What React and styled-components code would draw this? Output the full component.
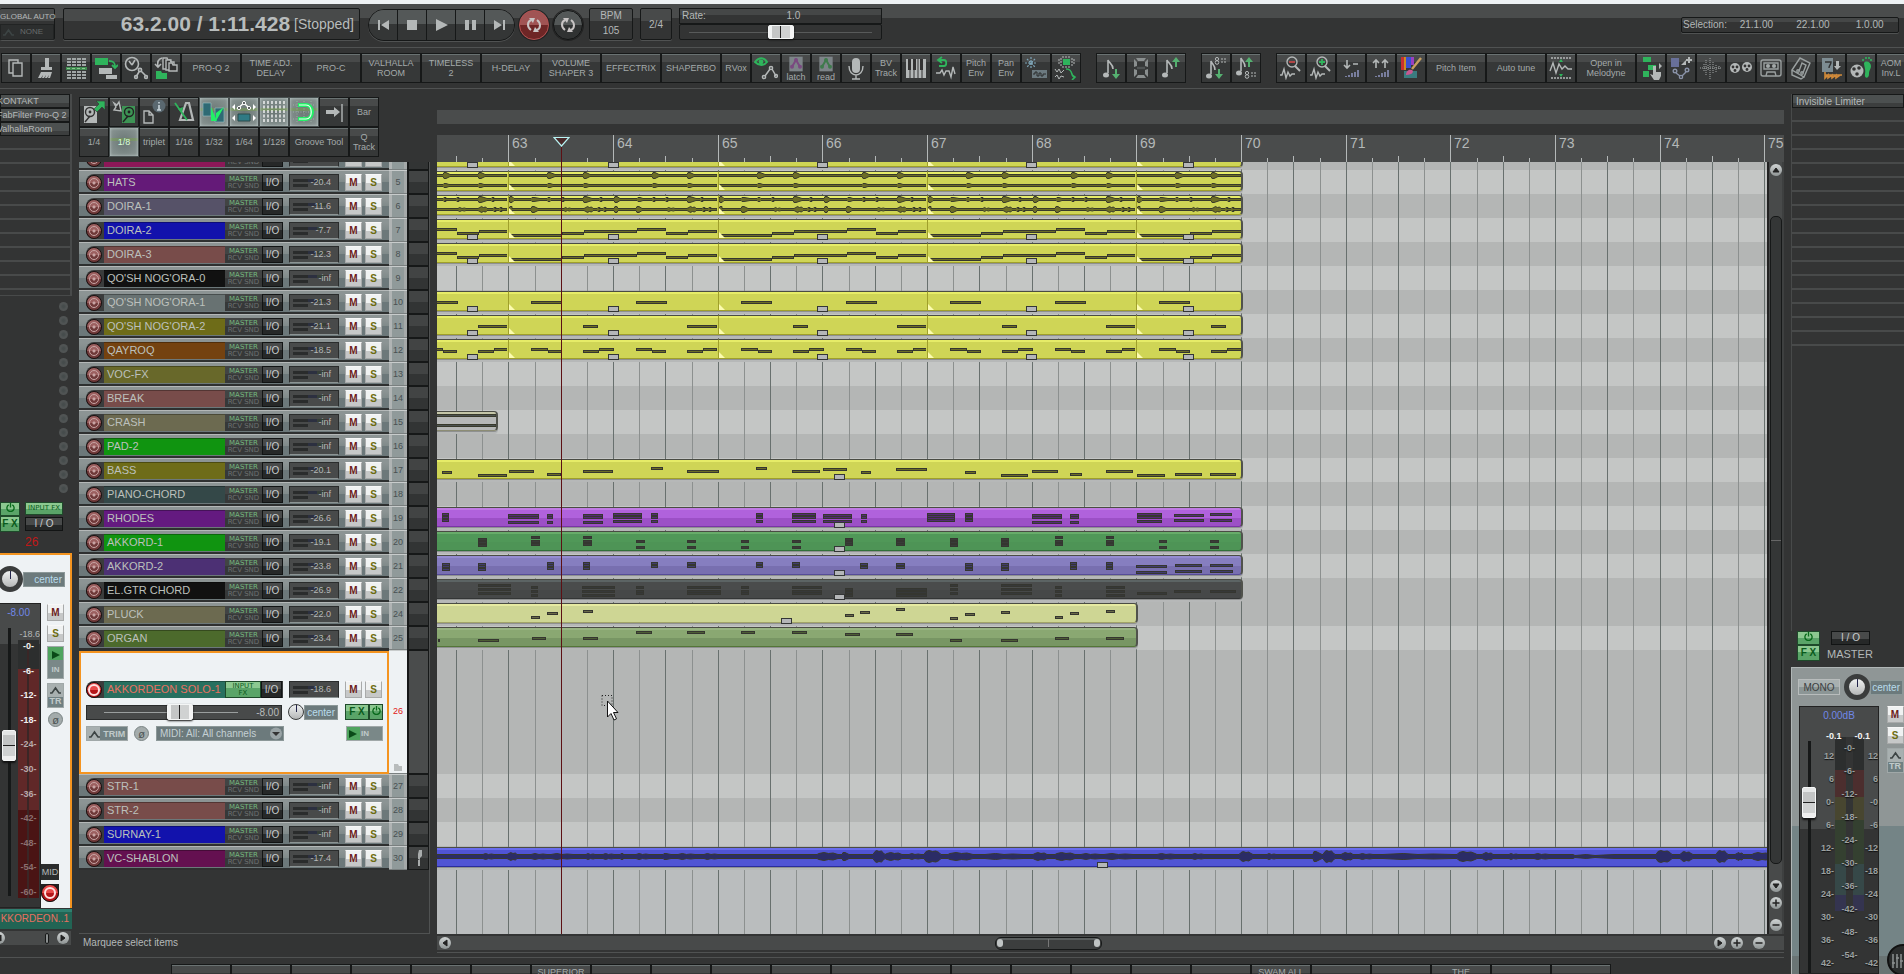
import React, { useState } from "react";
import styled, { createGlobalStyle, css } from "styled-components";

const GREEN = "#2fb45c";
const GREY = "#b4b8b8";

/* ---------- timeline maths ---------- */

const FIRST_BAR = 63;
const BAR_WIDTH = 104.66;
const barX = (bar) => Math.round(71.4 + (bar - FIRST_BAR) * BAR_WIDTH);

const quarters = [];
for (let i = 0; i < 80; i++) {
  quarters.push({ x: barX(62.5 + i / 4), kind: i % 4 === 2 ? "bar" : i % 2 === 0 ? "half" : "quarter" });
}
const bars = Array.from({ length: 18 }, (_, i) => FIRST_BAR + i);

/* ---------- data ---------- */

// notes are [x, width, y, y, ...], one y for each voice of the chord
const stepPattern = [[0, 53, 14], [53, 22, 12], [75, 53, 10], [128, 29, 8], [157, 22, 12], [179, 29, 10]];
const loops = {
  doira: stepPattern,
  nog1: [[22, 31, 9], [127, 31, 9]],
  nog2: [[74, 15, 9], [178, 30, 9]],
  qayroq: [[22, 17, 8], [39, 14, 10], [74, 16, 10], [90, 15, 8], [127, 16, 8], [143, 14, 10], [178, 16, 10], [194, 14, 8]],
};

const hits = {
  hats: [
    { mid: 4, bumps: [[38, 46, 3], [74, 81, 3], [143, 150, 3], [178, 185, 3]] },
    { mid: 14, bumps: [[38, 44, 2], [74, 80, 2], [143, 149, 2], [178, 184, 2]] },
  ],
  doira: [
    { mid: 4, bumps: [[0, 5, 3], [22, 31, 2], [38, 42, 2], [52, 54, 2], [74, 83, 3], [90, 92, 2], [105, 111, 3], [128, 134, 2], [143, 145, 2], [156, 158, 2], [178, 187, 3], [191, 193, 2]] },
    { mid: 14, bumps: [[0, 3, 3], [22, 29, 3], [53, 64, 2], [75, 86, 3], [88, 90, 2], [94, 96, 2], [105, 109, 3], [127, 133, 3], [156, 168, 2], [178, 189, 3], [193, 195, 2], [199, 201, 2]] },
  ],
};

const bass = [
  [5, 10, 11], [41, 29, 14], [72, 25, 10], [110, 14, 13], [146, 30, 10], [214, 12, 7], [250, 32, 10], [319, 11, 7],
  [355, 28, 10], [386, 24, 8], [424, 10, 11], [459, 31, 8], [528, 11, 11], [564, 27, 14], [595, 26, 10],
  [633, 12, 13], [669, 27, 10], [700, 28, 14], [738, 27, 13], [773, 26, 13],
];
const rhodes = [
  [5, 7, 5, 8, 11], [71, 31, 6, 8, 13], [110, 6, 6, 8, 13], [146, 20, 6, 8, 13], [176, 29, 5, 8, 12], [214, 7, 5, 8, 12],
  [319, 7, 5, 8, 12], [355, 24, 5, 8, 12], [386, 29, 6, 8, 12], [424, 6, 6, 8, 12], [490, 28, 5, 7, 9, 11],
  [528, 8, 5, 8, 11], [595, 30, 6, 8, 13], [633, 9, 6, 8, 13], [700, 25, 5, 8, 12], [737, 30, 6, 11], [773, 22, 5, 11],
];
const akkord1 = [
  [41, 9, 6, 9, 12], [94, 9, 4, 8, 11], [146, 9, 4, 8, 11], [199, 9, 8, 14], [250, 9, 8, 14], [304, 8, 8, 14],
  [355, 9, 8, 14], [408, 8, 6, 9, 11], [459, 9, 6, 9, 11], [513, 8, 6, 9, 12], [564, 8, 6, 9, 12], [618, 8, 4, 8, 11],
  [669, 8, 4, 8, 11], [722, 8, 8, 14], [773, 9, 8, 14],
];
const akkord2 = [
  [5, 8, 7, 9, 12], [41, 8, 7, 9, 12], [110, 7, 6, 8, 11], [146, 7, 6, 8, 11], [214, 7, 6, 9], [250, 9, 6, 9],
  [319, 7, 6, 9], [355, 8, 6, 9], [423, 8, 7, 10], [459, 9, 7, 10], [528, 8, 7, 9, 12], [564, 8, 7, 9, 12],
  [633, 7, 6, 8, 11], [669, 7, 6, 8, 11], [699, 31, 9, 15], [738, 27, 8, 14], [773, 23, 8, 14],
];
const guitar = [
  [41, 33, 4, 8, 12], [94, 7, 6, 10, 14], [145, 33, 6, 10, 14], [199, 8, 6, 10, 12], [250, 34, 6, 10, 12],
  [304, 8, 6, 10, 12], [355, 30, 6, 10, 12], [408, 8, 8, 11, 14], [459, 31, 8, 11, 14], [513, 8, 4, 8, 12],
  [564, 31, 4, 8, 12], [618, 7, 6, 10, 14], [669, 19, 6, 10, 14], [700, 30, 12], [737, 27, 10], [773, 26, 10],
];
const pluck = [
  [94, 9, 12], [110, 11, 8], [146, 10, 6], [408, 9, 10], [423, 10, 7], [459, 9, 4], [513, 8, 13],
  [528, 10, 9], [564, 9, 7], [618, 8, 12], [633, 9, 8], [669, 9, 6],
];
const organ = [
  [1, 2, 11], [41, 21, 11], [95, 14, 9], [146, 15, 9], [199, 16, 3], [250, 18, 3], [304, 14, 3], [355, 15, 3],
  [408, 15, 5], [459, 17, 5], [513, 12, 11], [564, 17, 11], [618, 14, 9], [669, 18, 9],
];
const vocal = [{
  mid: 9,
  base: 2,
  bumps: [
    [44, 59, 3], [70, 82, 4], [92, 112, 3], [112, 138, 3], [147, 160, 3], [164, 179, 3], [183, 186, 3], [197, 214, 3],
    [226, 234, 3], [239, 260, 3], [265, 283, 3], [380, 403, 4], [405, 412, 4], [436, 448, 6], [448, 467, 4],
    [470, 486, 3], [487, 504, 6], [511, 538, 4], [546, 588, 3], [596, 612, 4], [618, 640, 4], [642, 665, 3], [665, 698, 3],
    [718, 740, 3], [753, 769, 3], [802, 816, 5], [828, 841, 3], [876, 885, 5], [886, 898, 6], [904, 918, 4],
    [920, 938, 3], [944, 1018, 3], [1020, 1040, 5], [1045, 1058, 4], [1070, 1083, 3], [1095, 1114, 3],
    [1136, 1180, 2], [1219, 1235, 6], [1243, 1256, 5], [1279, 1291, 6], [1298, 1308, 4], [1315, 1335, 4],
  ],
}];

const palettes = {
  yellow: { hi: "#e6ec68", body: "#cfd556", low: "#cfd556", edge: "#a0a02a", note: "#6c6c26" },
  gray: { hi: "#c4c6a8", body: "#b6b8b8", low: "#b6b8b8", edge: "#8c8c74", note: "#4c5250" },
  purple: { hi: "#c07ae4", body: "#b062dc", low: "#9c50c6", edge: "#7a34a6", note: "#542a74" },
  green: { hi: "#68ac6a", body: "#509858", low: "#4e9456", edge: "#307038", note: "#383c38" },
  violet: { hi: "#948cd0", body: "#867ec0", low: "#786fb0", edge: "#564c98", note: "#403c6c" },
  dark: { hi: "#5c6464", body: "#4a4c4c", low: "#464848", edge: "#343636", note: "#363838" },
  cream: { hi: "#e6eaa2", body: "#ced694", low: "#ced694", edge: "#a2a468", note: "#6a6a48" },
  olive: { hi: "#98b482", body: "#8aa872", low: "#789664", edge: "#547638", note: "#4c5c34" },
  blue: { hi: "#686cec", body: "#5054d4", low: "#5054d4", edge: "#2a2c9c", note: "#2b2c66" },
};

const loopHandles = [30, 171, 380, 589, 746];
const looped = (pattern, wave) =>
  [[61, 63], [63, 65], [65, 67], [67, 69], [69, 70]].map(([from, to]) => ({
    x: barX(from), w: barX(to) - barX(from) + (to === 70 ? 2 : 0), palette: "yellow", notes: pattern, wave,
    fade: from > 61, last: to === 70,
  }));
const single = (palette, w, notes, wave) => [{ x: -10, w: w + 10, shift: 9, palette, notes, wave, last: true }];

const tracks = [
  { n: 4, name: "SD", color: "#8c1858", vol: "-inf", clips: looped([]), handles: loopHandles },
  { n: 5, name: "HATS", color: "#641a78", vol: "-20.4", clips: looped(null, hits.hats) },
  { n: 6, name: "DOIRA-1", color: "#565268", vol: "-11.6", clips: looped(null, hits.doira) },
  { n: 7, name: "DOIRA-2", color: "#1212ac", vol: "-7.7", clips: looped(loops.doira), handles: loopHandles },
  { n: 8, name: "DOIRA-3", color: "#784c4a", vol: "-12.3", clips: looped(loops.doira), handles: loopHandles },
  { n: 9, name: "QO'SH NOG'ORA-0", color: "#111111", vol: "-inf" },
  { n: 10, name: "QO'SH NOG'ORA-1", color: "#687272", vol: "-21.3", clips: looped(loops.nog1), handles: loopHandles },
  { n: 11, name: "QO'SH NOG'ORA-2", color: "#6e6c18", vol: "-21.1", clips: looped(loops.nog2), handles: loopHandles },
  { n: 12, name: "QAYROQ", color: "#744210", vol: "-18.5", clips: looped(loops.qayroq), handles: loopHandles },
  { n: 13, name: "VOC-FX", color: "#68682a", vol: "-inf" },
  { n: 14, name: "BREAK", color: "#784c4a", vol: "-inf" },
  { n: 15, name: "CRASH", color: "#6c6a50", vol: "-inf", clips: single("gray", 61, null, [{ mid: 4, bumps: [] }, { mid: 14, bumps: [] }]) },
  { n: 16, name: "PAD-2", color: "#109410", vol: "-inf" },
  { n: 17, name: "BASS", color: "#6e6c18", vol: "-20.1", clips: single("yellow", 806, bass), handles: [397] },
  { n: 18, name: "PIANO-CHORD", color: "#344848", vol: "-inf" },
  { n: 19, name: "RHODES", color: "#641a80", vol: "-26.6", clips: single("purple", 806, rhodes), handles: [397] },
  { n: 20, name: "AKKORD-1", color: "#109410", vol: "-19.1", clips: single("green", 806, akkord1), handles: [397] },
  { n: 21, name: "AKKORD-2", color: "#4c3074", vol: "-23.8", clips: single("violet", 806, akkord2), handles: [397] },
  { n: 22, name: "EL.GTR CHORD", color: "#111111", vol: "-26.9", clips: single("dark", 806, guitar), handles: [397] },
  { n: 24, name: "PLUCK", color: "#6c6a50", vol: "-22.0", clips: single("cream", 701, pluck), handles: [344] },
  { n: 25, name: "ORGAN", color: "#4c6a2c", vol: "-23.4", clips: single("olive", 701, organ) },
  { n: 26, name: "AKKORDEON SOLO-1", color: "#287060", vol: "-18.6", selected: true },
  { n: 27, name: "STR-1", color: "#784c4a", vol: "-inf" },
  { n: 28, name: "STR-2", color: "#784c4a", vol: "-inf" },
  { n: 29, name: "SURNAY-1", color: "#1212ac", vol: "-inf" },
  { n: 30, name: "VC-SHABLON", color: "#641050", vol: "-17.4", clips: single("blue", 2600, null, vocal), handles: [660], mic: true },
];

/* ---------- icons ---------- */

const note = "M9 17V4c1 3 5 4 5 9";
const icons = {
  copy: <g fill="none" stroke={GREY} strokeWidth="1.4"><path d="M14 7V4H5v13h4" /><path d="M9 7h9v13H9z" /></g>,
  brush: <g fill={GREY}><path d="M11 2h4v9h3v3H7v-3h4z" /><path d="M7 16h11l-2 6h-2l1-3-2 3h-2l1-3-2 3H8l1-3-2 3H4z" /></g>,
  rows: (
    <g fill="#a0a6a6">
      {[2, 5, 8, 15, 18, 21].map((y) => [3, 8, 13, 18].map((x) => <rect key={x + "-" + y} x={x} y={y} width="4" height="2" />))}
      <path fill="#3f8c50" d="M2 11h21v3H2z" />
      <path fill="#8cc890" d="M3 12h3v1H3zM8 12h3v1H8zM13 12h3v1h-3zM18 12h3v1h-3z" />
    </g>
  ),
  reorder: <g><path fill={GREEN} d="M1 2h13v7H1z" /><path fill="none" stroke={GREEN} strokeWidth="1.8" d="M15 5c5 0 6 2 6 6m-3-2 3 3 3-3" /><path fill={GREY} d="M5 12h13v6H5zM12 19h11v4H12z" /></g>,
  clock: <g fill="none" stroke={GREY} strokeWidth="1.6"><circle cx="8" cy="8" r="6.5" /><path d="M8 9 5 5m3 4 3-5M12 21l4-7 6 6" /><circle cx="16" cy="14" r="1.6" fill="#333" /><circle cx="12" cy="21" r="1.4" fill="#333" /><circle cx="22" cy="21" r="1.4" fill="#333" /></g>,
  folders: <g><g fill="#333" stroke={GREY} strokeWidth="1.4"><path d="M9 2h4l1 2h3v9H9z" /><path d="M12 4h4l1 2h3v8h-8z" /><path d="M15 7h3l1 2h4v6h-8z" /></g><path fill={GREEN} d="M2 15h5l1 2h5v6H2z" /><path fill="none" stroke={GREY} strokeWidth="1.6" d="M8 2C4 3 3 6 4 11m-3-3 3 3 3-3" /></g>,
  eye: <g fill="none"><path stroke={GREEN} strokeWidth="2" d="M1 6c4-5 9-5 12 0-3 4-8 4-12 0z" /><circle cx="7" cy="6" r="2.4" fill={GREEN} /><g stroke={GREY} strokeWidth="1.5"><circle cx="17" cy="12" r="1.6" /><path d="m16 13-5 7m7-7 4 7m-9 1" /><circle cx="10" cy="21" r="1.6" /><circle cx="22" cy="20" r="1.4" /></g></g>,
  env: (c) => <g><path fill="#7d8488" d="M2 1h20v22H2z" /><path fill="none" stroke={c} strokeWidth="3" d="m6 16 6-10 6 10" /><g fill={c}><circle cx="6" cy="16" r="3" /><circle cx="12" cy="6" r="3" /><circle cx="18" cy="16" r="3" /></g></g>,
  mic: <g fill={GREY}><rect x="8" y="2" width="8" height="15" rx="4" /><path fill="none" stroke={GREY} strokeWidth="1.4" d="M5 10c0 12 14 12 14 0M12 19v4m-4 0h8" /></g>,
  piano: <g><path fill={GREY} d="M2 3h20v19H2z" /><path stroke="#333" strokeWidth="1" d="M6 3v19M10 3v19M14 3v19M18 3v19" /><path fill="#333" d="M4 3h3v11H4zM9 3h3v11H9zM16 3h3v11h-3z" /></g>,
  undo: <g fill="none" strokeWidth="1.8"><path stroke={GREEN} d="M8 1 4 4l4 3M4 4h6c3 0 3 6 0 6H5" /><path stroke={GREY} strokeWidth="1.4" d="M2 17h4l2-3 2 5 2-4h3l2 6 2-10 2 7" /></g>,
  spark: <g><path stroke="#7fa6b8" strokeWidth="1.2" strokeDasharray="2 1" d="M7 1v12M1 7h12M3 3l8 8M11 3l-8 8" /><path fill="#6c7a80" d="M8 14h15v8H8z" /><path stroke="#2a2c2c" fill="none" d="M9 18h2v-2h2v4h2v-3h2v3h2v-2h3" /></g>,
  glue: <g><path fill={GREEN} d="M9 3h7v6H9z" /><path stroke={GREY} fill="none" strokeDasharray="2 1" d="M5 3v6M7 2v8M18 2v8M20 3v6M8 1h9M8 11h9" /><path stroke={GREY} fill="none" d="M1 13l2 3 2-3 2 4 3-3m-9 7 2-2 2 4 2-3 3 1" /><path stroke={GREEN} strokeWidth="1.6" fill="none" d="M12 13c8 0 4 8 9 8m-3-2 3 2-3 3" /></g>,
  noteDown: <g><path fill="none" stroke={GREY} strokeWidth="1.6" d={note} /><ellipse cx="7" cy="19" rx="3" ry="2.5" fill={GREY} /><path fill="#55b070" d="M16 13h2v5h3l-4 5-4-5h3z" /></g>,
  noteUp: <g><path fill="none" stroke={GREY} strokeWidth="1.6" d="M8 17V4c1 3 5 4 5 9" /><ellipse cx="6" cy="19" rx="3" ry="2.5" fill={GREY} /><path fill="#55b070" d="M16 11h2V6h3l-4-5-4 5h3z" /></g>,
  digit: <g><path fill="#8a8f8f" d="M7 2h10l-2 3H9zM7 22h10l-2-3H9zM5 3l3 3v4l-3 1zM19 3l-3 3v4l3 1zM5 21l3-3v-4l-3-1zM19 21l-3-3v-4l3-1z" /><path stroke="#505454" strokeWidth="2.4" d="M8 12h8" /></g>,
  octDown: <g><path fill="none" stroke={GREY} strokeWidth="1.6" d="M7 18V5c1 3 4 4 4 9" /><ellipse cx="5" cy="20" rx="3" ry="2.5" fill={GREY} /><path fill="#55b070" d="M14 13h2v5h3l-4 5-4-5h3z" /><g fill="none" stroke={GREY}><circle cx="13" cy="3" r="1.6" /><circle cx="13" cy="6.5" r="1.8" /><path d="M17 3h6M17 6h6" strokeDasharray="2 1" /></g></g>,
  octUp: <g><path fill="none" stroke={GREY} strokeWidth="1.6" d="M7 15V2c1 3 4 4 4 9" /><ellipse cx="5" cy="17" rx="3" ry="2.5" fill={GREY} /><path fill="#55b070" d="M14 11h2V6h3l-4-5-4 5h3z" /><g fill="none" stroke={GREY}><circle cx="13" cy="17" r="1.6" /><circle cx="13" cy="20.5" r="1.8" /><path d="M17 17h6M17 20h6" strokeDasharray="2 1" /></g></g>,
  zoomOut: <g fill="none" stroke={GREY} strokeWidth="1.4"><circle cx="13" cy="6" r="5" /><path stroke="#c04848" strokeWidth="1.8" d="M10 6h6" /><path d="m16 10 5 5" strokeWidth="2" /><path d="M1 19h2l2-6 2 9 2-6 2 4 2-2h3" /></g>,
  zoomIn: <g fill="none" stroke={GREY} strokeWidth="1.4"><circle cx="13" cy="6" r="5" /><path stroke={GREEN} strokeWidth="1.8" d="M10 6h6M13 3v6" /><path d="m16 10 5 5" strokeWidth="2" /><path d="M1 19h2l2-6 2 9 2-6 2 4 2-2h3" /></g>,
  volDown: <g><path fill="none" stroke={GREY} strokeWidth="1.6" d="M8 4v8m-3-3 3 3 3-3M14 8h5" /><path stroke="#8a90b8" strokeWidth="1.6" d="M7 21v-1M10 21v-2M13 21v-4M16 21v-5M19 21v-7" /></g>,
  volUp: <g><path fill="none" stroke={GREY} strokeWidth="1.6" d="M7 12V4M4 7l3-3 3 3M16 12V4m-3 3 3-3 3 3" /><path stroke="#8a90b8" strokeWidth="1.6" d="M7 21v-1M10 21v-2M13 21v-4M16 21v-5M19 21v-7" /></g>,
  paint: <g><path fill="#c83030" d="M2 1h3v13H2z" /><path fill="#d08a20" d="M5 1h2v13H5z" /><path fill="#3a50d0" d="M7 1h5v11H7z" /><path fill="#9a40c0" d="M12 1h3v8h-3z" /><path fill="#3a7c80" d="M5 15h13v7H5z" /><path fill="#c85890" d="M7 19c0-5 4-6 6-5s1 5-6 5z" /><path stroke="#c8a060" strokeWidth="2.4" d="m13 13 9-11" /></g>,
  fit: <g fill="none" stroke={GREY}><path strokeDasharray="2 1" d="M2 2h20M2 22h20" strokeWidth="1.6" /><path d="M1 15l3-8 3 10 3-9 3 5 3-3 3 3h4" strokeWidth="1.4" /><path fill={GREEN} stroke="none" d="m12 3 2 3h-4zM12 21l2-3h-4z" /></g>,
  touch: <g><path fill={GREEN} d="M4 1h8v5H4zM9 9h8v5H9zM4 15h6v6H4z" /><path fill={GREY} d="M14 10h3v6h5v4l-2 4h-5l-4-6 3 1zM20 7l3 3-3 3z" /></g>,
  nodes: <g><path fill="#68709a" d="M2 2h8v9H2z" /><path fill={GREY} d="m12 9 5-5v5zM19 1h2v6h-2zM17 3h6v2h-6z" /><g fill="none" stroke="#8a93a8" strokeWidth="1.4"><circle cx="6" cy="15" r="1.8" /><circle cx="12" cy="21" r="1.6" /><circle cx="18" cy="14" r="1.8" /><path d="m7 17 4 3m2 0 4-4" /></g></g>,
  dots: <g stroke="#a0a4a4" strokeDasharray="1 1"><path d="M1 12h22" /><path d="M5 8v8M7 4v16M9 9v6M11 2v21M14 6v12M17 9v7M20 10v4" /></g>,
  reels: <g><g fill={GREY}><circle cx="6" cy="12" r="5" /><circle cx="18" cy="11" r="5" /></g><g fill="#333"><circle cx="4" cy="11" r="1.4" /><circle cx="8" cy="11" r="1.4" /><circle cx="6" cy="14.5" r="1.4" /><circle cx="16" cy="10" r="1.4" /><circle cx="20" cy="10" r="1.4" /><circle cx="18" cy="13.5" r="1.4" /></g></g>,
  tape: <g fill="none" stroke="#9aa0a0" strokeWidth="1.4"><rect x="2" y="4" width="20" height="16" rx="2" /><path d="M5 7h14v6H5zM7 20l1-4h8l1 4" /><circle cx="9" cy="10" r="1.4" fill={GREY} /><circle cx="15" cy="10" r="1.4" fill={GREY} /></g>,
  book: <g fill="none" stroke="#9aa0a0" strokeWidth="1.4"><path d="M3 14 11 2l10 5-6 14zM3 14v5l9 4 3-2" /><path d="m10 15 3-8 4 2-3 8" /><circle cx="9" cy="15" r="1.2" /><circle cx="13" cy="17" r="1.2" /></g>,
  crossfade: <g><path fill="#7d8c92" d="M3 2h11v14H3z" /><path fill="none" stroke="#333" strokeWidth="1.4" d="M6 6h6c0 3-2 3-2 6" /><path fill={GREY} d="M17 5h3v5h2l-4 4-3-4h2z" /><path fill="none" stroke="#d08a3a" strokeWidth="1.6" d="M6 16v6l3-3 0 3 4-3v3l4-3v3l4-3M6 19h17" /></g>,
  foot: <g><circle cx="8" cy="15" r="6.5" fill={GREY} /><g fill="#333"><circle cx="5" cy="13" r="1.8" /><circle cx="10" cy="12" r="1.8" /><circle cx="8" cy="18" r="1.8" /></g><path fill={GREEN} d="M15 7c2-3 7-1 7 3 0 3-2 4-2 8 0 5-5 5-4 0 1-4-1-8-1-11z" /><path stroke={GREEN} strokeWidth="1.6" d="M14 5V3M17 3V1M20 3V1M22 5V3" /></g>,
  diskOut: <g><rect x="2" y="6" width="13" height="17" fill={GREY} /><circle cx="8" cy="12" r="4.5" fill="none" stroke="#333" strokeWidth="1.4" /><circle cx="8" cy="12" r="1.4" fill="#333" /><path d="m3 22 5-6" stroke="#333" strokeWidth="1.4" /><path fill={GREEN} stroke="#333" strokeWidth=".6" d="M14 1h9v9l-3-3-5 5-3-3 5-5z" /></g>,
  diskIn: <g><rect x="10" y="6" width="13" height="17" fill="#3d9455" /><circle cx="17" cy="12" r="4.5" fill="none" stroke="#222" strokeWidth="1.4" /><circle cx="17" cy="12" r="1.4" fill="#222" /><path d="m11 22 5-6" stroke="#222" strokeWidth="1.4" /><path fill="#333" stroke={GREY} strokeWidth="1.4" d="M2 3l3 2 2-3 2 9-7-1 2-3z" /></g>,
  info: <g><path fill="none" stroke={GREY} strokeWidth="1.4" d="M2 11h5l4 4v8H2zM7 11v4h4" /><circle cx="17" cy="6" r="6.5" fill="#5a6870" /><path stroke="#c8d4da" strokeWidth="1.6" d="M17 5v5M17 2v1.6M15 10h4" /></g>,
  metro: <g fill="none"><path stroke={GREY} strokeWidth="2.2" d="M14 3 8 20h13L17 3z" /><path stroke={GREEN} strokeWidth="1.8" d="m3 3 12 17" /><path fill={GREEN} d="m6 9 5-2-1 6z" /></g>,
  crossOn: <g><path fill="#2f6a74" stroke="#9cc4c8" strokeWidth=".6" d="M1 3h8v13H1zM13 8h9v14h-9z" /><path fill="#22f066" d="M9 7v14h6zM22 7l-8 6 0 8z" /></g>,
  envOn: <g><path fill="none" stroke="#fff" strokeWidth="1.4" d="M5 9l7-6 5 5" /><g fill="#4a5050" stroke="#fff"><circle cx="7" cy="8" r="1.6" /><circle cx="12" cy="3" r="1.6" /><circle cx="17" cy="8" r="1.6" /></g><path fill="#fff" d="m0 7 3-3v6zM24 7l-3-3v6zM0 18l3-3v6zM24 18l-3-3v6z" /><path fill="#2f7a84" stroke="#2a4a4a" d="M6 14h12v7H6z" /></g>,
  gridOn: <g stroke="#fff" strokeDasharray="3 1.5" strokeWidth="1.3"><path d="M2 1v22M6 1v22M10 1v22M14 1v22M18 1v22M22 1v22" /></g>,
  magnetOn: <g fill="none"><path stroke="#9ab0a4" strokeDasharray="1 1.5" d="M1 5h22M1 12h22M1 19h22M5 1v22M12 1v22M19 1v22" /><path stroke="#22f066" strokeWidth="4" d="M6 5h8c8 0 8 14 0 14H6" /><path stroke="#f0fff4" strokeWidth="1.2" d="M7 5h7c7 0 7 14 0 14H7" /></g>,
  arrow: <g><path fill={GREY} d="M4 10h8V7l6 5-6 5v-3H4z" /><path stroke={GREY} strokeWidth="1.4" d="M20 4v18" /></g>,
};

function Icon({ name, arg, size = 24 }) {
  const art = typeof icons[name] === "function" ? icons[name](arg) : icons[name];
  return <svg width={size} height={size} viewBox="0 0 24 24" aria-hidden="true">{art}</svg>;
}

/* ---------- page ---------- */

const GlobalStyle = createGlobalStyle`
  * { box-sizing: border-box; }
  body {
    margin: 0;
    background: #333434;
    font-family: "Liberation Sans", Arial, sans-serif;
    font-size: 10px;
    color: #b4b8b8;
    overflow: hidden;
  }
  button, select, input { font-family: inherit; margin: 0; padding: 0; border: 0; }
`;

const Page = styled.div`
  display: flex;
  flex-direction: column;
  height: 100vh;
  border-top: 4px solid #eef2f4;
  overflow: hidden;
`;

const Transport = styled.header`
  display: flex;
  align-items: flex-start;
  flex: none;
  height: 44px;
  padding: 4px 5px 0 0;
  background: linear-gradient(#4a4c4c 14px, #333434 14px);
  border-bottom: 1px solid #505252;
`;

const Inset = styled.div`
  height: 32px;
  border: 1px solid #161818;
  border-radius: 2px;
  box-shadow: 0 1px 0 #505252;
  background: linear-gradient(#484a4a 12px, #333434 12px);
`;

const GlobalAuto = styled(Inset)`
  width: 55px;
  font-size: 8px;
  line-height: 15px;
  text-align: center;
  border-left: 0;
  white-space: nowrap;
  small {
    display: flex;
    align-items: center;
    justify-content: space-between;
    font-size: 8px;
    line-height: 14px;
    color: #686c6c;
    padding: 0 10px 0 2px;
    border: 1px solid #222424;
    background: #2c2e2e;
  }
`;

const TimeBox = styled(Inset)`
  display: flex;
  align-items: center;
  justify-content: flex-end;
  width: 297px;
  margin-left: 8px;
  padding-right: 5px;
  gap: 4px;
  font-size: 14px;
  color: #b8bcbc;
  strong { font-size: 21px; }
`;

const Pill = styled.div`
  display: flex;
  height: 32px;
  margin: 1px 4px 0 8px;
  border: 1px solid #161818;
  border-radius: 16px;
  overflow: hidden;
  box-shadow: 0 1px 0 #505252;
`;

const TransportButton = styled.button`
  display: grid;
  place-items: center;
  width: 29px;
  height: 30px;
  background: linear-gradient(#545858 14px, #343636 14px);
  border-right: 1px solid #161818;
  svg { fill: ${GREY}; }
  &:last-child { border: 0; }
`;

const RoundButton = styled.button`
  display: grid;
  place-items: center;
  width: 30px;
  height: 30px;
  margin: 2px 4px 0 0;
  border-radius: 50%;
  border: 1px solid ${(p) => (p.$rec ? "#b45050" : "#121414")};
  box-shadow: 0 0 0 1px #222;
  background: ${(p) => (p.$rec ? "linear-gradient(#a05454 14px, #6e2626 14px)" : "linear-gradient(#545858 14px, #303232 14px)")};
`;

const Bpm = styled(Inset).attrs({ as: "label" })`
  width: 44px;
  margin-left: 2px;
  text-align: center;
  font-size: 10px;
  line-height: 14px;
  input {
    width: 100%;
    height: 15px;
    background: none;
    color: inherit;
    font-size: 10px;
    text-align: center;
  }
`;

const Signature = styled(Inset).attrs({ as: "button" })`
  width: 32px;
  margin-left: 7px;
  color: inherit;
  font-size: 10px;
`;

const Rate = styled.div`
  width: 203px;
  margin-left: 7px;
  label {
    display: flex;
    height: 16px;
    padding-left: 2px;
    border: 1px solid #161818;
    font-size: 10px;
    line-height: 14px;
    background: linear-gradient(#454747 6px, #333434 6px);
  }
  output { flex: 1; text-align: center; }
`;

const thumb = css`
  -webkit-appearance: none;
  background: linear-gradient(90deg, #f0f2f2 3px, #c4c6c6 3px 11px, #222 11px 12px, #d0d2d2 12px 21px, #f4f4f4 21px);
  border: 1px solid #f4f6f6;
  border-radius: 2px;
  box-shadow: 0 1px 2px #111;
`;

const HSlider = styled.input.attrs({ type: "range" })`
  -webkit-appearance: none;
  width: ${(p) => p.$w || "100%"};
  height: ${(p) => p.$h}px;
  background: linear-gradient(${(p) => p.$line}, ${(p) => p.$line}) center / calc(100% - 18px) 1px no-repeat;
  &::-webkit-slider-thumb {
    ${thumb}
    width: 26px;
    height: ${(p) => p.$t}px;
  }
`;

const RateTrack = styled.div`
  height: 16px;
  border: 1px solid #161818;
  border-radius: 2px;
  line-height: 0;
`;

const VSlider = styled.input.attrs({ type: "range" })`
  -webkit-appearance: none;
  writing-mode: vertical-lr;
  direction: rtl;
  flex: none;
  width: 14px;
  height: ${(p) => p.$h}px;
  background: linear-gradient(#161818, #161818) center / 3px 100% no-repeat;
  &::-webkit-slider-thumb {
    -webkit-appearance: none;
    width: 14px;
    height: 31px;
    border: 1px solid #f4f6f6;
    border-radius: 2px;
    background: linear-gradient(#e4e6e6 4px, #c2c4c4 4px 14px, #222 14px 15px, #cfd1d1 15px 25px, #eee 25px);
    box-shadow: 0 2px 2px #111;
  }
`;

const Selection = styled(Inset)`
  display: flex;
  height: 16px;
  width: 218px;
  margin: 9px 0 0 auto;
  font-size: 10px;
  line-height: 14px;
  background: linear-gradient(#454747 4px, #333434 4px);
  span { flex: 1; text-align: center; }
  span:first-child { flex: none; width: 46px; }
`;

const Toolbar = styled.nav`
  display: flex;
  flex: none;
  height: 41px;
  padding: 5px 0 0 1px;
  border-bottom: 1px solid #505252;
  overflow: hidden;
`;

const Tool = styled.button`
  display: flex;
  flex-direction: column;
  align-items: center;
  justify-content: ${(p) => (p.$low ? "flex-end" : "center")};
  flex: none;
  width: ${(p) => (p.$wide ? 60 : 30)}px;
  height: 30px;
  margin-left: ${(p) => (p.$gap ? 15 : 0)}px;
  border: 1px solid #161818;
  background: linear-gradient(#6a7272 1px, #484a4a 1px 8px, #363838 8px);
  color: #a4aaaa;
  font-size: 9px;
  line-height: 10px;
  white-space: pre-line;
  overflow: hidden;
  ${(p) => p.$on && css`
    background: linear-gradient(transparent 10px, rgba(120, 160, 80, 0.5) 10px 13px, transparent 13px), radial-gradient(#6a7674, #8c9896);
    border-color: #485050;
    box-shadow: inset 0 0 3px #c0cccc;
    color: #d8ffd8;
  `}
`;

const Main = styled.main`
  display: flex;
  flex: 1;
  min-height: 0;
`;

/* ---------- mixer strips ---------- */

const Strip = styled.section`
  display: flex;
  flex-direction: column;
  flex: none;
  width: ${(p) => p.$w}px;
  padding-top: 5px;
  overflow: hidden;
`;

const FxSlots = styled.div`
  flex: none;
  height: ${(p) => p.$h}px;
  border: solid #484a4a;
  border-width: ${(p) => (p.$master ? "0 0 0 1px" : "0 2px 1px 0")};
`;

const FxSlot = styled.div`
  height: 14px;
  border-bottom: 2px solid #484a4a;
  text-indent: ${(p) => (p.$master ? 3 : -4)}px;
  font-size: ${(p) => (p.$master ? 10 : 9)}px;
  line-height: 13px;
  white-space: nowrap;
  ${(p) => p.$filled && css`
    border: 1px solid #161818;
    background: linear-gradient(#4c5050 8px, #3c3e3e 8px);
  `}
`;

const Sends = styled.div`
  display: flex;
  flex-direction: column;
  align-items: flex-end;
  flex: 1;
  gap: 5px;
  padding: 6px 4px 0 0;
  i { width: 9px; height: 9px; border-radius: 50%; background: radial-gradient(#464c4c 1px, #505454 3px); }
`;

const StripHead = styled.div`
  display: flex;
  flex: none;
  height: 30px;
  gap: ${(p) => (p.$master ? 11 : 5)}px;
  padding-left: ${(p) => (p.$master ? 6 : 0)}px;
`;

const GreenKey = styled.button`
  border: 1px solid #1e4a2a;
  background: linear-gradient(#8cc890 6px, #5aa468 6px);
  color: #0a5a1c;
  font-family: ${(p) => (p.$tiny ? '"DejaVu Sans", sans-serif' : "inherit")};
  font-size: ${(p) => (p.$tiny ? 7 : 10)}px;
  font-weight: ${(p) => (p.$tiny ? "normal" : "bold")};
  line-height: ${(p) => (p.$tiny ? 7 : 12)}px;
  white-space: pre-line;
  width: ${(p) => p.$w}px;
  height: ${(p) => p.$h}px;
`;

const FxStack = styled.div`
  display: flex;
  flex-direction: column;
`;

const KeyColumn = styled.div`
  display: flex;
  flex-direction: column;
  gap: ${(p) => p.$gap}px;
`;

const IoKey = styled.button`
  width: ${(p) => p.$w}px;
  height: ${(p) => p.$h}px;
  border: 1px solid #121414;
  background: linear-gradient(#484a4a 7px, #262828 7px);
  color: #c8cccc;
  font-size: 10px;
  line-height: 12px;
  white-space: nowrap;
`;

const HeadText = styled.div`
  color: ${(p) => p.color};
  font-size: 12px;
  line-height: 16px;
`;

const MasterTitle = styled(HeadText)`
  margin-left: -4px;
  font-size: 11px;
`;

const StripNumber = styled(HeadText)`
  flex: none;
  height: 21px;
  padding: 2px 0 0 25px;
`;

const WhitePanel = styled.div`
  display: flex;
  flex-direction: column;
  flex: none;
  height: 355px;
  background: #eef2f4;
  border: solid #f49420;
  border-width: 2px 2px 0 0;
`;

const PanRow = styled.div`
  display: flex;
  align-items: center;
  flex: none;
  height: ${(p) => p.$h}px;
  padding: 0 ${(p) => p.$r}px ${(p) => p.$b || 0}px ${(p) => p.$l}px;
`;

const Knob = styled.span`
  flex: none;
  width: ${(p) => p.$d}px;
  height: ${(p) => p.$d}px;
  margin-left: ${(p) => p.$ml || 0}px;
  border-radius: 50%;
  border: ${(p) => p.$ring}px solid #3a3c3c;
  background: linear-gradient(#22244a, #22244a) center top / 1px 50% no-repeat, linear-gradient(#f0f2f2, #b4b6b6);
`;

const PanLabel = styled.span`
  flex: 1;
  height: 15px;
  padding-right: 2px;
  border: 1px solid #8c9898;
  background: #6c7a7c;
  color: #b8dcec;
  font-size: 10px;
  line-height: 13px;
  text-align: right;
`;

const StripBody = styled.div`
  display: flex;
  flex: 1;
  min-height: 0;
  padding-left: ${(p) => (p.$master ? 7 : 0)}px;
`;

const MeterBox = styled.div`
  flex: none;
  width: ${(p) => p.$w}px;
  background: linear-gradient(#484a4a ${(p) => p.$split}px, #333434 ${(p) => p.$split}px);
  border: 1px solid #222;
  border-left-width: ${(p) => (p.$w > 50 ? 1 : 0)}px;
  overflow: hidden;
`;

const DbValue = styled.div`
  height: ${(p) => p.$h}px;
  padding-right: ${(p) => p.$r}px;
  color: #7088e8;
  font-size: 10px;
  line-height: 18px;
  text-align: ${(p) => (p.$r ? "right" : "center")};
`;

const MeterRow = styled.div`
  display: flex;
  padding-left: 2px;
`;

const LeftMeter = styled.div`
  flex: 1;
  font-size: 9px;
  line-height: 12px;
  text-align: right;
`;

const LeftScale = styled.div`
  display: flex;
  flex-direction: column;
  justify-content: space-between;
  height: 258px;
  margin: 0 1px 0 2px;
  font-weight: bold;
  font-size: 9px;
  text-align: center;
  color: #b8aaaa;
  background:
    linear-gradient(90deg, transparent 9px, #3a2626 9px 11px, transparent 11px),
    linear-gradient(#2c2e2e 29px, #602828 29px 170px, #4a1414 170px);
  span:nth-child(-n + 4) { color: #f0f0f0; }
  span:nth-child(n + 8) { color: #8a7070; }
`;

const SideKeys = styled.div`
  display: flex;
  flex-direction: column;
  align-items: center;
  gap: 4px;
  flex: 1;
  padding: ${(p) => p.$top || 0}px 0 ${(p) => p.$bottom || 0}px ${(p) => p.$l}px;
`;

const Key = styled.button`
  flex: none;
  width: 17px;
  height: 17px;
  border: 1px solid #a8aaaa;
  border-top-color: #f8f8f8;
  background: linear-gradient(#f0f2f2 8px, #c6c8c8 8px);
  color: ${(p) => p.color};
  font-size: 10px;
  font-weight: bold;
  line-height: 14px;
`;

const GreyKey = styled.button`
  display: flex;
  flex-direction: ${(p) => (p.$row ? "row" : "column")};
  align-items: center;
  justify-content: space-around;
  flex: none;
  width: ${(p) => p.$w}px;
  height: ${(p) => p.$h}px;
  border: 1px solid #a0a8a8;
  background: linear-gradient(${(p) => (p.$row ? "90deg, " : "")}#a8b0b0 13px, #708082 13px);
  color: #c0caca;
  font-size: 9px;
  font-weight: bold;
  line-height: 10px;
`;

const MonitorKey = styled(GreyKey)`
  justify-content: ${(p) => (p.$row ? "flex-start" : "space-around")};
  gap: ${(p) => (p.$row ? 3 : 0)}px;
  background: linear-gradient(${(p) => (p.$row ? "90deg, " : "")}#4fa45e 13px, #7a8888 13px);
  font-size: 8px;
`;

const RecKey = styled.button`
  display: grid;
  place-items: center;
  flex: none;
  width: ${(p) => p.$d}px;
  height: ${(p) => p.$d}px;
  border-radius: 50%;
  border: 1px solid #1c1010;
  background: ${(p) => (p.$armed ? "linear-gradient(#e84848 50%, #b41418 50%)" : "linear-gradient(#9c6060 50%, #703a3a 50%)")};
  &::after {
    content: "";
    width: 8px;
    height: 8px;
    border-radius: 50%;
    border: ${(p) => (p.$armed ? "2px solid #ffe0e0" : "1px solid #c8a4a4")};
    background: ${(p) => (p.$armed ? "none" : "radial-gradient(#c8a4a4 1px, transparent 2px)")};
  }
`;

const MidLabel = styled.span`
  align-self: flex-start;
  width: 18px;
  height: 16px;
  margin-top: auto;
  background: #2a2c2c;
  font-size: 9px;
  line-height: 16px;
  text-align: center;
`;

const CornerRec = styled.div`
  align-self: flex-start;
  display: flex;
  background: #222;
  border-radius: 0 0 9px 9px;
`;

const StripName = styled.div`
  display: flex;
  justify-content: flex-end;
  flex: none;
  height: 20px;
  margin-top: 1px;
  padding-right: 3px;
  background: linear-gradient(#2f8070 3px, #226454 3px);
  color: #e87060;
  font-size: 10px;
  line-height: 20px;
  white-space: nowrap;
`;

const MiniScroll = styled.div`
  display: flex;
  align-items: center;
  flex: none;
  gap: 8px;
  height: 14px;
  margin: 2px 1px 12px 0;
  padding-right: 2px;
  background: #484a4a;
  i { width: 4px; height: 11px; border: 1px solid #161818; border-radius: 2px; background: #8a8e8e; }
  button:first-child { margin: 0 auto 0 -7px; }
`;

const RoundKey = styled.button`
  display: grid;
  place-items: center;
  flex: none;
  width: 12px;
  height: 12px;
  border-radius: 50%;
  background: linear-gradient(#d0d4d4, #8e9494);
  svg { stroke: #222; fill: #222; }
`;

/* ---------- master ---------- */

// runs past the bottom toolbar, down to the window edge
const MasterSlot = styled.aside`
  display: flex;
  margin: 0 0 -17px 7px;
`;

const MasterPanel = styled.div`
  display: flex;
  flex-direction: column;
  flex: none;
  height: 307px;
  padding-top: 5px;
  border: solid #b0b6b6;
  border-width: 1px 0 0 1px;
  background: linear-gradient(#8f9696 158px, #748486 158px 288px, #6a7474 288px);
`;

const MonoKey = styled.button`
  width: 42px;
  height: 16px;
  border: 1px solid #b8bcbc;
  background: linear-gradient(#a8b0b0 7px, #8c9696 7px);
  color: #3c4040;
  font-size: 10px;
`;

const Peaks = styled.div`
  position: relative;
  z-index: 1;
  display: flex;
  justify-content: flex-end;
  gap: 13px;
  padding-right: 8px;
  color: #f4f4f4;
  font-size: 9px;
  font-weight: bold;
  line-height: 10px;
`;

const ScaleCol = styled.div`
  width: ${(p) => p.$w}px;
  margin: ${(p) => p.$top}px 0 0 ${(p) => p.$ml || 0}px;
  font-size: 9px;
  font-weight: bold;
  line-height: 23px;
  color: #9ca0a0;
  text-align: ${(p) => p.$align};
  text-shadow: 0 1px 1px #111;
  white-space: nowrap;
`;

const Bars = styled(ScaleCol)`
  background:
    linear-gradient(90deg, transparent 11px, #333434 11px 18px, transparent 18px),
    linear-gradient(#2c2e2e 33px, #4c2e2e 33px 60px, #484630 60px 83px, #344030 83px 127px, #364848 127px 158px, #343450 158px 174px, transparent 174px);
`;

/* ---------- track panel ---------- */

const TrackPanel = styled.section`
  display: flex;
  flex-direction: column;
  flex: none;
  width: 351px;
  margin: 8px 7px 0 7px;
`;

const GridTools = styled.div`
  display: grid;
  grid-template-columns: repeat(10, 30px);
  flex: none;
  margin-bottom: 5px;
  & > button:nth-child(18) { grid-column: span 2; width: 60px; }
`;

const TrackList = styled.div`
  flex: 1;
  min-height: 0;
  overflow: hidden;
  border-right: 1px solid #505252;
  border-bottom: 1px solid #505252;
`;

const Pull = styled.div`
  margin-top: -16px;
`;

const Row = styled.div`
  display: flex;
  height: ${(p) => (p.$tall ? 124 : 24)}px;
`;

const RowBody = styled.div`
  display: flex;
  align-items: flex-start;
  width: 310px;
  padding: 3px 0 0 7px;
  border-top: 1px solid #b4b8b8;
  border-bottom: 2px solid #2e3030;
  background: linear-gradient(#8c9494 4px, #808a8a 11px, #6c787a 11px);
`;

const ControlBlock = styled.div`
  display: flex;
  align-items: center;
  width: 197px;
  height: 17px;
  margin-right: 6px;
  border-radius: 8px 0 0 8px;
  background: #3a3c3c;
`;

const Name = styled.span`
  width: 121px;
  height: 17px;
  margin-left: 2px;
  padding-left: 3px;
  background: ${(p) => p.$bg};
  box-shadow: inset 0 1px 0 rgba(0, 0, 0, 0.3);
  color: ${(p) => p.color || "#bcc0bc"};
  font-size: 11px;
  line-height: 17px;
  white-space: nowrap;
`;

const Routing = styled.button`
  width: 37px;
  height: 17px;
  background: linear-gradient(#424444 8px, #363838 8px);
  color: #74b87e;
  font-family: "DejaVu Sans", sans-serif;
  font-size: 7px;
  line-height: 7px;
  text-align: center;
  span { display: block; color: #6c7070; }
`;

const RowMeter = styled.span`
  width: 50px;
  height: 17px;
  padding-right: 7px;
  margin-right: 6px;
  border: 1px solid #2a2c2c;
  border-bottom-color: #8c9494;
  background:
    linear-gradient(90deg, transparent 3px, #2a2c2c 3px 18px, #2c3040 18px 27px, #364038 27px 36px, #4c3434 36px 40px, transparent 40px) 0 4px / 100% 3px no-repeat,
    linear-gradient(90deg, transparent 3px, #2a2c2c 3px 18px, transparent 18px) 0 9px / 100% 3px no-repeat,
    #484a4a;
  color: #b4b8b8;
  font-size: 9px;
  line-height: 14px;
  text-align: right;
`;

const KeyPair = styled.span`
  display: flex;
  gap: 3px;
`;

const RowNumber = styled.div`
  display: flex;
  align-items: center;
  justify-content: center;
  width: 18px;
  border-top: 1px solid #c8cccc;
  border-bottom: 1px solid #7a8080;
  background: linear-gradient(90deg, #b0b4b4 3px, #909a9a 3px 15px, #a4a8a8 15px);
  color: #485052;
  font-size: 9px;
  ${(p) => p.$tall && css`
    flex-direction: column;
    justify-content: flex-end;
    gap: 48px;
    padding-bottom: 2px;
    background: #eef2f4;
    color: #e01818;
  `}
`;

const RowTail = styled.div`
  display: grid;
  place-items: center;
  width: 22px;
  border: solid #161818;
  border-width: 1px 1px 1px 2px;
  background: ${(p) => (p.$tall ? "#4a4c4c" : "linear-gradient(#424444 11px, #323434 11px)")};
`;

const SelectedBody = styled.div`
  display: flex;
  flex-direction: column;
  gap: 6px;
  width: 310px;
  margin-top: 1px;
  padding: 28px 0 0 5px;
  border: 2px solid #f49420;
  background: #eef2f4;
`;

const Line = styled.div`
  display: flex;
  align-items: center;
`;

const VolumeBox = styled.div`
  display: flex;
  align-items: center;
  width: 196px;
  height: 15px;
  margin-right: 6px;
  padding: 0 2px 0 8px;
  border: 1px solid #2a2c2c;
  background: #484a4a;
  color: #b8bcbc;
  font-size: 10px;
  span { flex: 1; text-align: right; }
`;

const SmallPan = styled(PanLabel)`
  flex: none;
  width: 34px;
  margin-right: 7px;
`;

const SelectWrap = styled.label`
  display: flex;
  align-items: center;
  width: 128px;
  height: 15px;
  margin: 0 62px 0 7px;
  border: 1px solid #8c9898;
  background: #6c7a7c;
  svg { flex: none; }
`;

const MidiSelect = styled.select`
  appearance: none;
  flex: 1;
  height: 13px;
  padding-left: 3px;
  background: none;
  color: #c4d0d4;
  font-size: 10px;
`;

const Phase = styled.button`
  flex: none;
  width: 15px;
  height: 15px;
  margin-left: ${(p) => p.$ml || 0}px;
  border: 1px solid #7a8484;
  border-radius: 50%;
  background: #a4acac;
  color: #4a5252;
  font-size: 11px;
  line-height: 12px;
`;

const Status = styled.div`
  flex: none;
  height: 23px;
  padding: 3px 0 0 4px;
  font-size: 10px;
  line-height: 12px;
`;

/* ---------- arrange ---------- */

const Arrange = styled.section`
  display: flex;
  flex-direction: column;
  flex: 1;
  min-width: 0;
  padding-top: 21px;
`;

const RegionBand = styled.div`
  flex: none;
  height: 14px;
  margin-bottom: 11px;
  background: #4a4c4c;
`;

const Ruler = styled.div`
  position: relative;
  flex: none;
  height: 27px;
  background: #4a4c4c;
  overflow: hidden;
`;

const BarNumber = styled.span`
  position: absolute;
  top: 0;
  padding-left: 3px;
  border-left: 1px solid #b4b8b8;
  height: 27px;
  color: #b4b8b8;
  font-size: 14px;
  line-height: 17px;
`;

const Tick = styled.i`
  position: absolute;
  bottom: 0;
  width: 1px;
  height: ${(p) => (p.$kind === "half" ? 6 : 4)}px;
  background: #b4b8b8;
`;

const CursorHead = styled.svg`
  position: absolute;
  top: 2px;
  left: 116px;
`;

const CanvasRow = styled.div`
  display: flex;
  flex: 1;
  min-height: 0;
`;

const Canvas = styled.div`
  position: relative;
  flex: 1;
  min-width: 0;
  overflow: hidden;
  background: #babdbe;
`;

const Lane = styled.div`
  position: relative;
  height: ${(p) => (p.$tall ? 124 : 24)}px;
  background: ${(p) => (p.$light ? "#c4c6c5" : "#b4b6b5")};
`;

const GridLine = styled.i`
  position: absolute;
  top: 0;
  bottom: 0;
  width: 1px;
  background: ${(p) => (p.$kind === "quarter" ? "#8c908f" : "#68706e")};
`;

const Clip = styled.div`
  position: absolute;
  z-index: 1;
  top: 1px;
  height: 20px;
  border-top: 1px solid #4a4c44;
  border-bottom: 1px solid ${(p) => p.$c.edge};
  border-left: 1px solid ${(p) => p.$c.edge};
  border-right: ${(p) => (p.$last ? "2px solid #50524c" : "0")};
  border-radius: ${(p) => (p.$last ? "0 4px 4px 0" : "0")};
  background: linear-gradient(${(p) => p.$c.hi} 2px, ${(p) => p.$c.body} 2px 10px, ${(p) => p.$c.low} 10px);
  box-shadow: 0 1px 0 #8e9090, 0 3px 0 #b6b8b8;
  svg { display: block; }
`;

const Handle = styled.i`
  position: absolute;
  z-index: 2;
  top: 16px;
  width: 11px;
  height: 6px;
  border: 1px solid #343636;
  background: #b4b6b8;
`;

const PlayLine = styled.i`
  position: absolute;
  z-index: 3;
  top: 0;
  bottom: 0;
  left: 124px;
  width: 1px;
  background: #5c1014;
`;

const Pointer = styled.svg`
  position: absolute;
  z-index: 4;
  left: 164px;
  top: 533px;
`;

const VScroll = styled.div`
  display: flex;
  flex-direction: column;
  align-items: center;
  width: 17px;
  padding: 2px 0 3px;
  border-left: 2px solid #222;
  border-right: 2px solid #3e4040;
  background: #484a4a;
  gap: 5px;
`;

const VTrack = styled.div`
  display: flex;
  align-items: center;
  flex: 1;
  width: 12px;
  margin: 35px 0 11px;
  border: 1px solid #161818;
  border-radius: 5px;
  background: #343636;
  &::after { content: ""; width: 100%; height: 1px; background: #666; }
`;

const HScroll = styled.div`
  display: flex;
  align-items: center;
  flex: none;
  height: 14px;
  margin: 2px 0 7px;
  padding: 0 19px 0 2px;
  gap: 5px;
  background: #484a4a;
  box-shadow: 0 2px 0 #333434, 0 3px 0 #505252;
`;

const HGap = styled.span`
  flex: ${(p) => p.$grow};
`;

const HThumb = styled.div`
  display: flex;
  align-items: center;
  justify-content: space-between;
  width: 107px;
  height: 13px;
  padding: 0 1px;
  border: 1px solid #161818;
  border-radius: 6px;
  background: linear-gradient(#5a5e5e 2px, #3c3e3e 2px);
  i { width: 6px; height: 8px; border-radius: 4px; background: #c0c4c4; }
  b { width: 1px; height: 8px; background: #777; }
`;

const BottomBar = styled.nav`
  display: flex;
  align-items: flex-start;
  flex: none;
  height: 17px;
  margin-right: 120px;
  padding: 6px 0 0 171px;
  border-top: 1px solid #505252;
  overflow: hidden;
`;

const BottomTool = styled(Tool)`
  justify-content: flex-start;
  padding-top: 2px;
`;

/* ---------- parts ---------- */

const Glyph = ({ kind }) => (
  <svg width="8" height="8" viewBox="0 0 8 8" aria-hidden="true">
    {kind === "left" && <path d="M6 1v6L2 4z" />}
    {kind === "right" && <path d="M2 1v6l4-3z" />}
    {kind === "down" && <path d="M1 2h6L4 6z" />}
    {kind === "up" && <path d="M1 6h6L4 2z" />}
    {kind === "plus" && <path d="M.5 4h7M4 .5v7" strokeWidth="1.5" />}
    {kind === "minus" && <path d="M.5 4h7" strokeWidth="1.5" />}
  </svg>
);

const Power = () => (
  <svg width="9" height="9" viewBox="0 0 10 10" fill="none" stroke="#0a6a1c" strokeWidth="1.5" aria-hidden="true">
    <path d="M3 2a4 4 0 1 0 4 0M5 0v5" />
  </svg>
);

const Peak = () => (
  <svg width="11" height="10" viewBox="0 0 11 10" fill="none" stroke="#3c4444" strokeWidth="1.6" aria-hidden="true">
    <path d="M0 8h2l3.500-5L9 8h2" />
  </svg>
);

const PlayMark = () => (
  <svg width="11" height="10" viewBox="0 0 11 10" fill="#0a4a18" aria-hidden="true"><path d="M2 1l8 4-8 4z" /></svg>
);

const Loop = () => (
  <svg width="18" height="18" viewBox="0 0 18 18" fill="none" stroke="#c8c4c4" strokeWidth="2" aria-hidden="true">
    <path d="M6 14C2 11 2 6 6 4M12 4c4 3 4 8 0 10" />
    <path fill="#c8c4c4" stroke="none" d="M4 2h6L8 7zM14 16H8l2-5z" />
  </svg>
);

function wavePath({ mid, bumps, base = 1 }, width, shift) {
  let top = `M0 ${mid - base}`;
  let bottom = "";
  bumps.forEach(([a, b, h]) => {
    const wide = b - a > 9;
    const xs = wide
      ? [[a, base], [a + 2, h - 1], [a + (b - a) * 0.3, h], [a + (b - a) * 0.5, h - 1], [a + (b - a) * 0.7, h - 0.5], [b - 2, Math.max(h - 2, base)], [b, base]]
      : [[a, base], [a + 1, h], [a + 3, h], [b, base]];
    xs.forEach(([x, y]) => {
      top += `L${x + shift} ${mid - y}`;
      bottom = `L${x + shift} ${mid + y}` + bottom;
    });
  });
  return `${top}L${width} ${mid - base}V${mid + base}${bottom}L0 ${mid + base}Z`;
}

function ClipArt({ clip }) {
  const c = palettes[clip.palette];
  const width = clip.w - (clip.last ? 3 : 2);
  const shift = clip.shift || 0;
  return (
    <svg width={width} height="18">
      {clip.wave && clip.wave.map((w) => (
        <path key={w.mid} d={wavePath({ ...w, mid: w.mid - 0.5 }, width, shift)} fill={c.note} stroke="#383a2c" />
      ))}
      {clip.notes && clip.notes.map(([x, w, ...ys]) =>
        ys.map((y) => (
          <g key={`${x}-${y}`}>
            <rect x={x + shift} y={y} width={w} height="3" fill="#353630" />
            <rect x={x + shift + 1} y={y + 1} width={Math.max(w - 2, 0)} height="1" fill={c.note} />
          </g>
        ))
      )}
      {clip.fade && <path d="M0 18v-6l6 6z" fill="#fcfcb0" />}
    </svg>
  );
}

function TrackRow({ track }) {
  return (
    <Row>
      <RowBody>
        <ControlBlock>
          <RecKey $d={16} aria-label={`Arm ${track.name}`} />
          <Name $bg={track.color}>{track.name}</Name>
          <Routing>MASTER<span>RCV SND</span></Routing>
          <IoKey $w={21} $h={17}>I/O</IoKey>
        </ControlBlock>
        <RowMeter>{track.vol}</RowMeter>
        <KeyPair>
          <Key color="#6c1c1c">M</Key>
          <Key color="#6c6c10">S</Key>
        </KeyPair>
      </RowBody>
      <RowNumber>{track.n}</RowNumber>
      <RowTail>
        {track.mic && (
          <svg width="8" height="16" viewBox="0 0 8 16" fill="#a8acac" aria-hidden="true"><path d="M4 0h3v6L5 8v2L3 9V4zM3 10h2v6H3z" /></svg>
        )}
      </RowTail>
    </Row>
  );
}

function SelectedTrackRow({ track }) {
  const [volume, setVolume] = useState(57);
  return (
    <Row $tall>
      <SelectedBody>
        <Line>
          <ControlBlock>
            <RecKey $d={16} $armed aria-label={`Arm ${track.name}`} />
            <Name $bg={track.color} color="#e87060">{track.name}</Name>
            <GreenKey $tiny $w={36} $h={17}>{"INPUT\nFX"}</GreenKey>
            <IoKey $w={21} $h={17}>I/O</IoKey>
          </ControlBlock>
          <RowMeter>{track.vol}</RowMeter>
          <KeyPair>
            <Key color="#6c1c1c">M</Key>
            <Key color="#6c6c10">S</Key>
          </KeyPair>
        </Line>
        <Line>
          <VolumeBox>
            <HSlider $w="152px" $h={13} $t={16} $line="#9a9e9e" aria-label="Track volume" value={volume} onChange={(e) => setVolume(e.target.value)} />
            <span>-8.00</span>
          </VolumeBox>
          <Knob $d={16} $ring={1} />
          <SmallPan>center</SmallPan>
          <GreenKey $w={24} $h={16}>F X</GreenKey>
          <GreenKey $w={14} $h={16} aria-label="Bypass"><Power /></GreenKey>
        </Line>
        <Line>
          <GreyKey $row $w={42} $h={15}><Peak />TRIM</GreyKey>
          <Phase $ml={6} aria-label="Invert phase">ø</Phase>
          <SelectWrap>
            <MidiSelect aria-label="Record input">
              <option>MIDI: All: All channels</option>
            </MidiSelect>
            <svg width="14" height="13" viewBox="0 0 14 13" aria-hidden="true">
              <circle cx="7" cy="6.5" r="6" fill="#9aa4a6" />
              <path d="M3 5h8l-4 4z" fill="#333" />
            </svg>
          </SelectWrap>
          <MonitorKey $row $w={37} $h={15}><PlayMark /><span>IN</span></MonitorKey>
        </Line>
      </SelectedBody>
      <RowNumber $tall>
        {track.n}
        <svg width="8" height="7" viewBox="0 0 8 7" fill="#b8bcbc" aria-hidden="true"><path d="M0 0h4l1 2h3v5H0z" /></svg>
      </RowNumber>
      <RowTail $tall />
    </Row>
  );
}

const mainTools = [
  { icon: "copy" }, { icon: "brush" }, { icon: "rows" }, { icon: "reorder" }, { icon: "clock" }, { icon: "folders" },
  { text: "PRO-Q 2", wide: true }, { text: "TIME ADJ.\nDELAY", wide: true }, { text: "PRO-C", wide: true },
  { text: "VALHALLA\nROOM", wide: true }, { text: "TIMELESS\n2", wide: true }, { text: "H-DELAY", wide: true },
  { text: "VOLUME\nSHAPER 3", wide: true }, { text: "EFFECTRIX", wide: true }, { text: "SHAPERBO", wide: true },
  { text: "RVox" }, { icon: "eye" }, { icon: "env", arg: "#7a4a80", text: "latch" }, { icon: "env", arg: "#3f7a4c", text: "read" },
  { icon: "mic" }, { text: "BV\nTrack" }, { icon: "piano" }, { icon: "undo" }, { text: "Pitch\nEnv" }, { text: "Pan\nEnv" },
  { icon: "spark" }, { icon: "glue" },
  { icon: "noteDown", gap: true }, { icon: "digit" }, { icon: "noteUp" },
  { icon: "octDown", gap: true }, { icon: "octUp" },
  { icon: "zoomOut", gap: true }, { icon: "zoomIn" }, { icon: "volDown" }, { icon: "volUp" }, { icon: "paint" },
  { text: "Pitch Item", wide: true }, { text: "Auto tune", wide: true }, { icon: "fit" },
  { text: "Open in\nMelodyne", wide: true }, { icon: "touch" }, { icon: "nodes" }, { icon: "dots" }, { icon: "reels" },
  { icon: "tape" }, { icon: "book" }, { icon: "crossfade" }, { icon: "foot" }, { text: "AOM\nInv.L" },
];

const gridTools = [
  { icon: "diskOut" }, { icon: "diskIn" }, { icon: "info" }, { icon: "metro" }, { icon: "crossOn", on: true },
  { icon: "envOn", on: true }, { icon: "gridOn", on: true }, { icon: "magnetOn", on: true }, { icon: "arrow" }, { text: "Bar" },
  { text: "1/4" }, { text: "1/8", on: true }, { text: "triplet" }, { text: "1/16" }, { text: "1/32" }, { text: "1/64" },
  { text: "1/128" }, { text: "Groove Tool" }, { text: "Q\nTrack" },
];

const bottomTools = Array.from({ length: 24 }, (_, i) => ({ 6: "SUPERIOR", 18: "SWAM ALL", 21: "THE" })[i] || "");

const ToolButtons = ({ items }) =>
  items.map((t, i) => (
    <Tool key={i} $wide={t.wide} $gap={t.gap} $on={t.on} $low={t.icon && t.text} aria-label={t.text ? undefined : t.icon}>
      {t.icon && <Icon name={t.icon} arg={t.arg} size={t.text ? 16 : 24} />}
      {t.text}
    </Tool>
  ));

function TransportBar() {
  const [bpm, setBpm] = useState("105");
  const [rate, setRate] = useState(50);
  return (
    <Transport>
      <GlobalAuto>GLOBAL AUTO<small><Peak />NONE</small></GlobalAuto>
      <TimeBox><strong>63.2.00 / 1:11.428</strong>[Stopped]</TimeBox>
      <Pill>
        {["M2 2h2v10H2zM13 2v10L5 7z", "M2 2h10v10H2z", "M2 1l12 6-12 6z", "M2 2h4v10H2zM9 2h4v10H9z", "M1 2l8 5-8 5zM10 2h2v10h-2z"].map((d, i) => (
          <TransportButton key={d} aria-label={["Go to start", "Stop", "Play", "Pause", "Go to end"][i]}>
            <svg width="14" height="14" viewBox="0 0 14 14"><path d={d} /></svg>
          </TransportButton>
        ))}
      </Pill>
      <RoundButton $rec aria-label="Record"><Loop /></RoundButton>
      <RoundButton aria-label="Repeat"><Loop /></RoundButton>
      <Bpm>BPM<input value={bpm} onChange={(e) => setBpm(e.target.value)} /></Bpm>
      <Signature>2/4</Signature>
      <Rate>
        <label htmlFor="rate">Rate:<output>1.0</output></label>
        <RateTrack>
          <HSlider id="rate" $h={14} $t={14} $line="#585a5a" value={rate} onChange={(e) => setRate(e.target.value)} />
        </RateTrack>
      </Rate>
      <Selection><span>Selection:</span><span>21.1.00</span><span>22.1.00</span><span>1.0.00</span></Selection>
    </Transport>
  );
}

function ChannelStrip() {
  const [level, setLevel] = useState(57);
  return (
    <Strip $w={72}>
      <FxSlots $h={202}>
        {["KONTAKT", "FabFilter Pro-Q 2", "ValhallaRoom"].map((fx) => <FxSlot key={fx} $filled>{fx}</FxSlot>)}
        {Array.from({ length: 11 }, (_, i) => <FxSlot key={i} />)}
      </FxSlots>
      <Sends>{Array.from({ length: 14 }, (_, i) => <i key={i} />)}</Sends>
      <StripHead>
        <FxStack>
          <GreenKey $w={20} $h={14} aria-label="Bypass"><Power /></GreenKey>
          <GreenKey $w={20} $h={16}>F X</GreenKey>
        </FxStack>
        <KeyColumn $gap={2}>
          <GreenKey $tiny $w={38} $h={13}>INPUT FX</GreenKey>
          <IoKey $w={38} $h={14}>I / O</IoKey>
        </KeyColumn>
      </StripHead>
      <StripNumber color="#c01818">26</StripNumber>
      <WhitePanel>
        <PanRow $h={48} $l={0} $r={5}>
          <Knob $d={26} $ring={5} $ml={-3} />
          <PanLabel>center</PanLabel>
        </PanRow>
        <StripBody>
          <MeterBox $w={41} $split={40}>
            <DbValue $h={24} $r={10}>-8.00</DbValue>
            <MeterRow>
              <VSlider $h={268} aria-label="Channel volume" value={level} onChange={(e) => setLevel(e.target.value)} />
              <LeftMeter>
                -18.6
                <LeftScale>
                  {[0, 6, 12, 18, 24, 30, 36, 42, 48, 54, 60].map((n) => <span key={n}>-{n}-</span>)}
                </LeftScale>
              </LeftMeter>
            </MeterRow>
          </MeterBox>
          <SideKeys $l={0} $top={1} $bottom={6}>
            <Key color="#6c1c1c">M</Key>
            <Key color="#6c6c10">S</Key>
            <MonitorKey $w={17} $h={33}><PlayMark /><span>IN</span></MonitorKey>
            <GreyKey $w={17} $h={25}><Peak />TR</GreyKey>
            <Phase aria-label="Invert phase">ø</Phase>
            <MidLabel>MID</MidLabel>
            <CornerRec><RecKey $d={18} $armed aria-label="Arm channel" /></CornerRec>
          </SideKeys>
        </StripBody>
      </WhitePanel>
      <StripName>KKORDEON..1</StripName>
      <MiniScroll>
        <RoundKey aria-label="Scroll left"><Glyph kind="left" /></RoundKey>
        <i />
        <RoundKey aria-label="Scroll right"><Glyph kind="right" /></RoundKey>
      </MiniScroll>
    </Strip>
  );
}

function MasterStrip() {
  const [level, setLevel] = useState(78);
  return (
    <MasterSlot>
      <Strip $w={113}>
        <FxSlots $master $h={537}>
          <FxSlot $filled $master>Invisible Limiter</FxSlot>
          {Array.from({ length: 17 }, (_, i) => <FxSlot key={i} />)}
        </FxSlots>
        <StripHead $master>
          <FxStack>
            <GreenKey $w={23} $h={14} aria-label="Bypass"><Power /></GreenKey>
            <GreenKey $w={23} $h={16}>F X</GreenKey>
          </FxStack>
          <KeyColumn $gap={1}>
            <IoKey $w={39} $h={15}>I / O</IoKey>
            <MasterTitle color="#b4b8b8">MASTER</MasterTitle>
          </KeyColumn>
        </StripHead>
        <HGap $grow={1} />
        <MasterPanel>
          <PanRow $h={33} $b={5} $l={6} $r={1}>
            <MonoKey>MONO</MonoKey>
            <Knob $d={26} $ring={5} $ml={4} />
            <PanLabel>center</PanLabel>
          </PanRow>
          <StripBody $master>
            <MeterBox $w={80} $split={122}>
              <DbValue $h={24}>0.00dB</DbValue>
              <Peaks><span>-0.1</span><span>-0.1</span></Peaks>
              <MeterRow>
                <VSlider $h={240} aria-label="Master volume" value={level} onChange={(e) => setLevel(e.target.value)} />
                <ScaleCol $w={18} $top={4} $align="right">
                  {["12", "6", "0-", "6-", "12-", "18-", "24-", "30-", "36-", "42-"].map((s, i) => <div key={i}>{s}</div>)}
                </ScaleCol>
                <Bars $w={29} $ml={1} $top={-4} $align="center">
                  {[0, 6, 12, 18, 24, 30, 36, 42, 48, 54].map((n) => <div key={n}>-{n}-</div>)}
                </Bars>
                <ScaleCol $w={14} $top={4} $align="right">
                  {["12", "6", "-0", "-6", "-12", "-18", "-24", "-30", "-36", "-42"].map((s, i) => <div key={i}>{s}</div>)}
                </ScaleCol>
              </MeterRow>
            </MeterBox>
            <SideKeys $l={7}>
              <Key color="#6c1c1c">M</Key>
              <Key color="#6c6c10">S</Key>
              <GreyKey $w={17} $h={25}><Peak />TR</GreyKey>
              <HGap $grow={1} />
              <svg width="17" height="30" viewBox="0 0 17 30" aria-hidden="true">
                <circle cx="16" cy="16" r="15" fill="#2a2c2c" stroke="#111" strokeWidth="2" />
                <path d="M6 10v14M10 10v14M14 10v14M5 19h3M9 14h3M13 17h3" stroke="#8c9090" strokeWidth="1.5" />
              </svg>
            </SideKeys>
          </StripBody>
        </MasterPanel>
      </Strip>
    </MasterSlot>
  );
}

function ArrangeView() {
  return (
    <Arrange>
      <RegionBand />
      <Ruler>
        {bars.map((b) => <BarNumber key={b} style={{ left: barX(b) }}>{b}</BarNumber>)}
        {quarters.filter((q) => q.kind !== "bar").map((q) => <Tick key={q.x} $kind={q.kind} style={{ left: q.x }} />)}
        <CursorHead width="17" height="25" viewBox="0 0 17 25">
          <path d="M1 .5h15L8.500 9z" fill="#4a2a2a" stroke="#b8f4f4" strokeWidth="1.2" />
          <path d="M8.500 10v15" stroke="#5c1014" />
        </CursorHead>
      </Ruler>
      <CanvasRow>
        <Canvas>
          <Pull>
            {tracks.map((t) => (
              <Lane key={t.n} $tall={t.selected} $light={t.n % 2 === 1}>
                {t.clips && t.clips.map((c) => (
                  <Clip key={c.x} $c={palettes[c.palette]} $last={c.last} style={{ left: c.x, width: c.w }}>
                    <ClipArt clip={c} />
                  </Clip>
                ))}
                {t.handles && t.handles.map((x) => <Handle key={x} style={{ left: x }} />)}
              </Lane>
            ))}
          </Pull>
          {quarters.map((q) => <GridLine key={q.x} $kind={q.kind} style={{ left: q.x }} />)}
          <PlayLine />
          <Pointer width="20" height="28" viewBox="0 0 20 28">
            <path d="M1 .5h10v10H1z" fill="none" stroke="#222" strokeDasharray="1 2" />
            <path d="M6.500 6v16l3.500-3.500 3 6.500 2.500-1.200-3-6.300H17z" fill="#fff" stroke="#111" />
          </Pointer>
        </Canvas>
        <VScroll>
          <RoundKey aria-label="Scroll up"><Glyph kind="up" /></RoundKey>
          <VTrack />
          <RoundKey aria-label="Scroll down"><Glyph kind="down" /></RoundKey>
          <RoundKey aria-label="Zoom in vertically"><Glyph kind="plus" /></RoundKey>
          <span />
          <RoundKey aria-label="Zoom out vertically"><Glyph kind="minus" /></RoundKey>
        </VScroll>
      </CanvasRow>
      <HScroll>
        <RoundKey aria-label="Scroll left"><Glyph kind="left" /></RoundKey>
        <HGap $grow={540} />
        <HThumb><i /><b /><i /></HThumb>
        <HGap $grow={608} />
        <RoundKey aria-label="Scroll right"><Glyph kind="right" /></RoundKey>
        <RoundKey aria-label="Zoom in"><Glyph kind="plus" /></RoundKey>
        <span />
        <RoundKey aria-label="Zoom out"><Glyph kind="minus" /></RoundKey>
      </HScroll>
    </Arrange>
  );
}

export default function App() {
  return (
    <Page>
      <GlobalStyle />
      <TransportBar />
      <Toolbar><ToolButtons items={mainTools} /></Toolbar>
      <Main>
        <ChannelStrip />
        <TrackPanel>
          <GridTools><ToolButtons items={gridTools} /></GridTools>
          <TrackList>
            <Pull>
              {tracks.map((t) => (t.selected ? <SelectedTrackRow key={t.n} track={t} /> : <TrackRow key={t.n} track={t} />))}
            </Pull>
          </TrackList>
          <Status>Marquee select items</Status>
        </TrackPanel>
        <ArrangeView />
        <MasterStrip />
      </Main>
      <BottomBar>
        {bottomTools.map((text, i) => <BottomTool key={i} $wide>{text}</BottomTool>)}
      </BottomBar>
    </Page>
  );
}
